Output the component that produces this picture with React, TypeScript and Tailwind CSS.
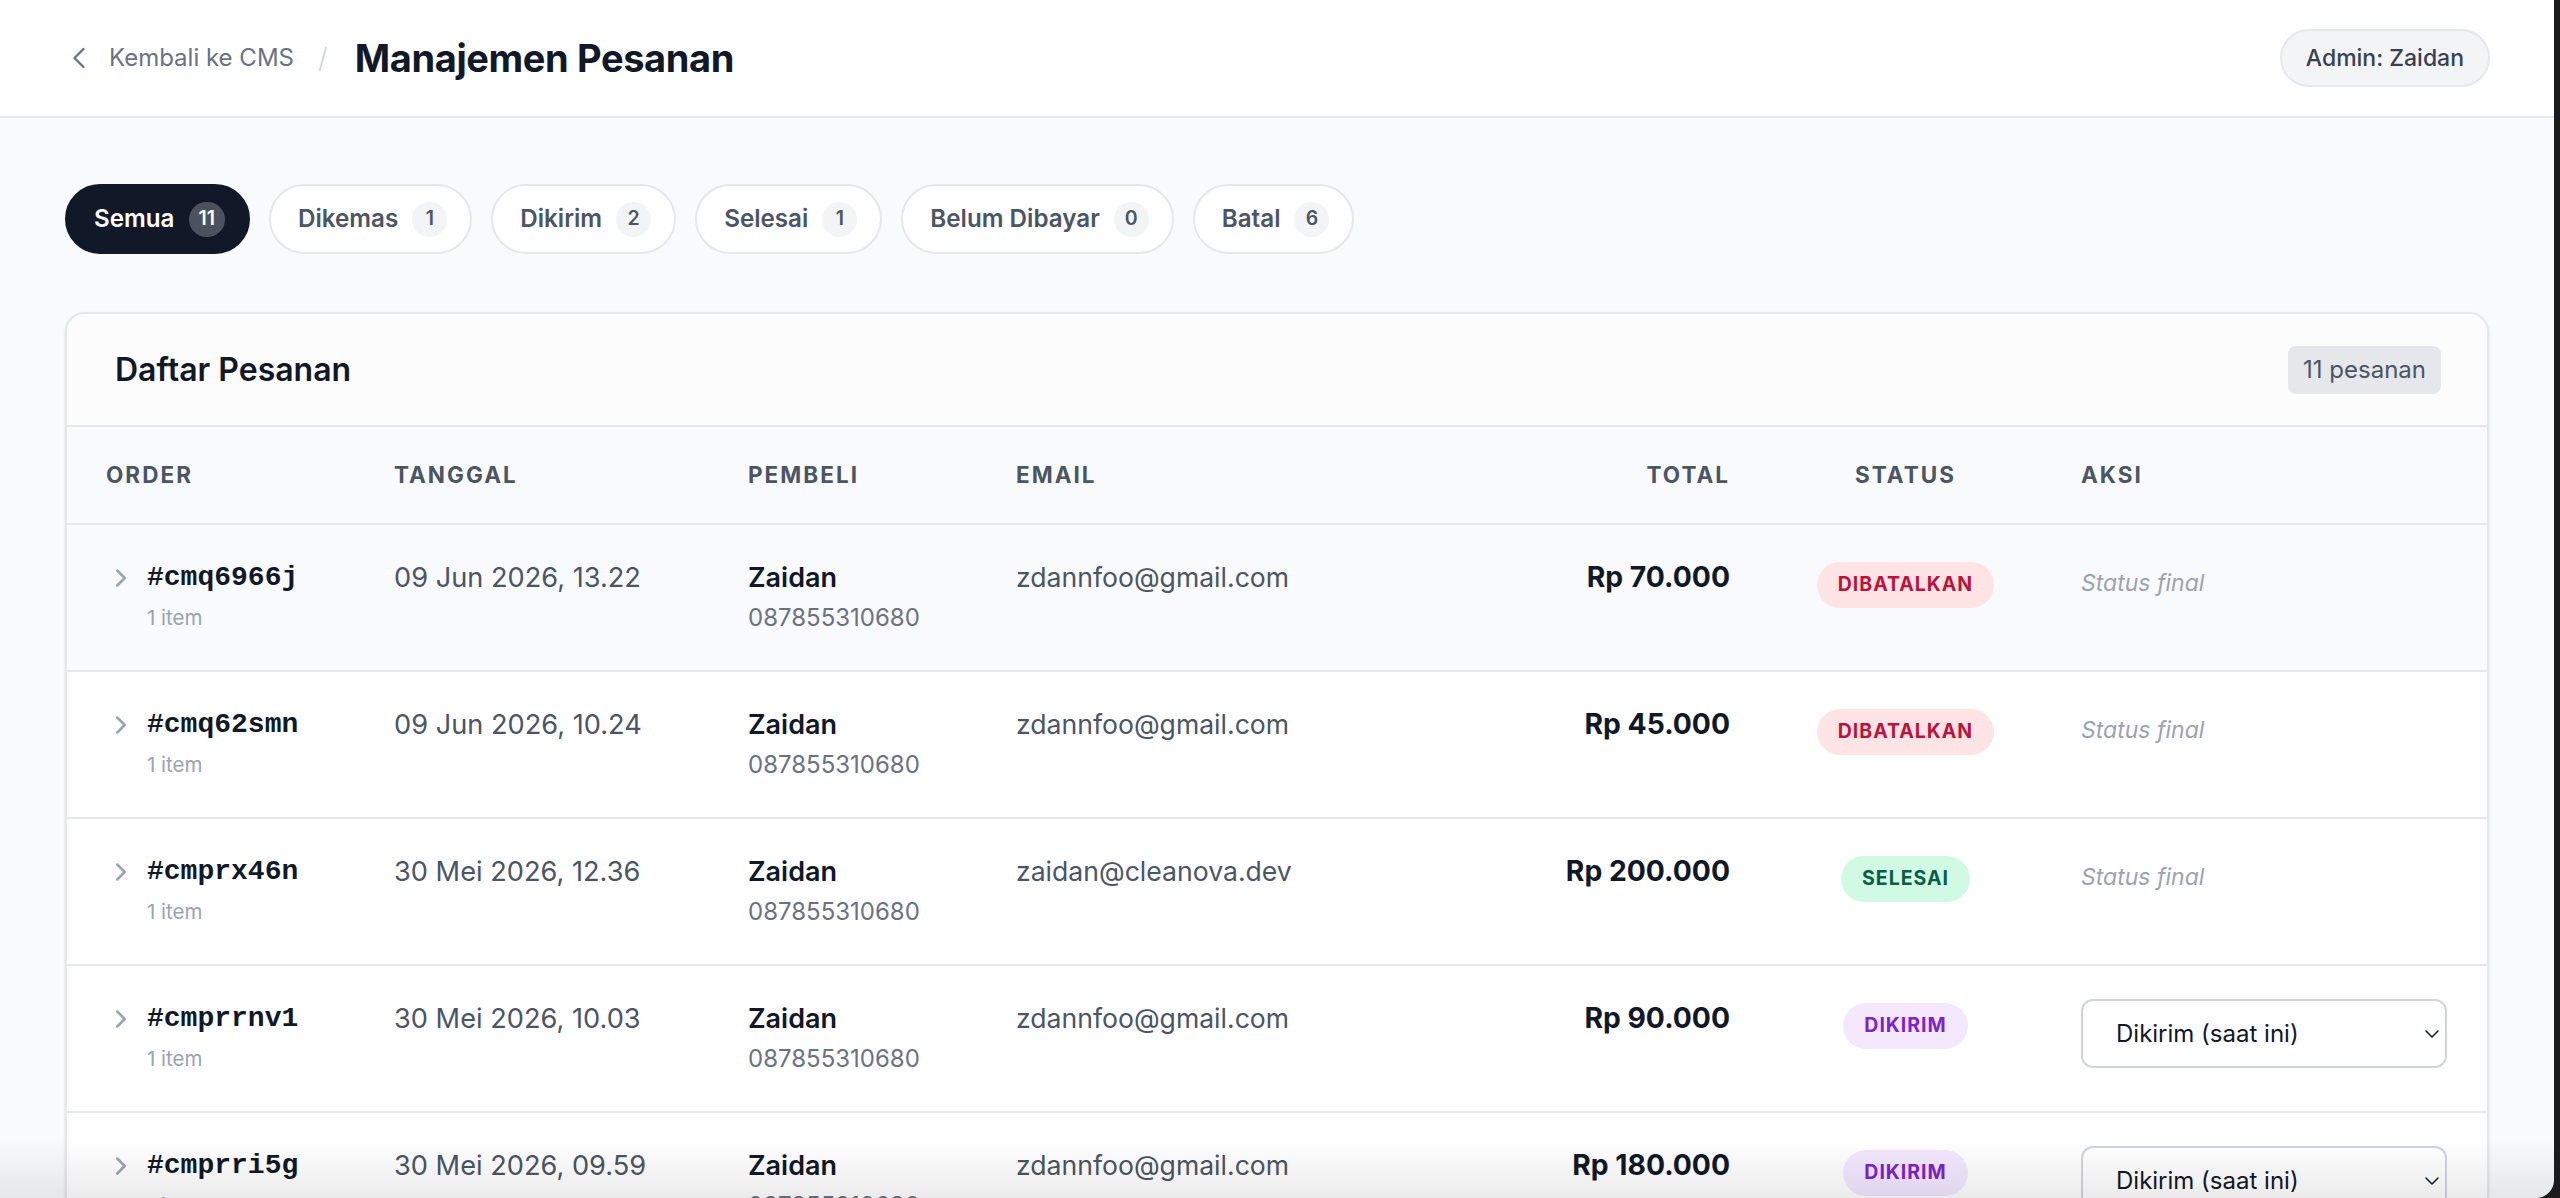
import { ChevronLeft, ChevronRight, ChevronDown } from "lucide-react";

type Status = "DIBATALKAN" | "SELESAI" | "DIKIRIM" | "DIKEMAS" | "DIBAYAR";

type Order = {
  id: string;
  date: string;
  name: string;
  phone: string;
  email: string;
  total: string;
  items: number;
  status: Status;
};

const orders: Order[] = [
  { id: "cmq6966j", date: "09 Jun 2026, 13.22", name: "Zaidan", phone: "087855310680", email: "zdannfoo@gmail.com", total: "Rp 70.000", items: 1, status: "DIBATALKAN" },
  { id: "cmq62smn", date: "09 Jun 2026, 10.24", name: "Zaidan", phone: "087855310680", email: "zdannfoo@gmail.com", total: "Rp 45.000", items: 1, status: "DIBATALKAN" },
  { id: "cmprx46n", date: "30 Mei 2026, 12.36", name: "Zaidan", phone: "087855310680", email: "zaidan@cleanova.dev", total: "Rp 200.000", items: 1, status: "SELESAI" },
  { id: "cmprrnv1", date: "30 Mei 2026, 10.03", name: "Zaidan", phone: "087855310680", email: "zdannfoo@gmail.com", total: "Rp 90.000", items: 1, status: "DIKIRIM" },
  { id: "cmprri5g", date: "30 Mei 2026, 09.59", name: "Zaidan", phone: "087855310680", email: "zdannfoo@gmail.com", total: "Rp 180.000", items: 1, status: "DIKIRIM" },
  { id: "cmpr8k2x", date: "29 Mei 2026, 21.14", name: "Zaidan", phone: "087855310680", email: "zdannfoo@gmail.com", total: "Rp 65.000", items: 1, status: "DIKEMAS" },
  { id: "cmpq1a7d", date: "28 Mei 2026, 16.40", name: "Zaidan", phone: "087855310680", email: "zdannfoo@gmail.com", total: "Rp 120.000", items: 2, status: "DIBATALKAN" },
  { id: "cmpp93fe", date: "27 Mei 2026, 08.12", name: "Zaidan", phone: "087855310680", email: "zdannfoo@gmail.com", total: "Rp 45.000", items: 1, status: "DIBATALKAN" },
  { id: "cmpo4w0c", date: "26 Mei 2026, 19.05", name: "Zaidan", phone: "087855310680", email: "zdannfoo@gmail.com", total: "Rp 70.000", items: 1, status: "DIBATALKAN" },
  { id: "cmpn7t2b", date: "25 Mei 2026, 11.31", name: "Zaidan", phone: "087855310680", email: "zdannfoo@gmail.com", total: "Rp 90.000", items: 1, status: "DIBATALKAN" },
  { id: "cmpm2h9q", date: "24 Mei 2026, 14.47", name: "Zaidan", phone: "087855310680", email: "zdannfoo@gmail.com", total: "Rp 150.000", items: 2, status: "DIBAYAR" },
];

const tabs = [
  { label: "Semua", count: 11 },
  { label: "Dikemas", count: 1 },
  { label: "Dikirim", count: 2 },
  { label: "Selesai", count: 1 },
  { label: "Belum Dibayar", count: 0 },
  { label: "Batal", count: 6 },
];

const badgeStyle: Record<Status, string> = {
  DIBATALKAN: "bg-[#ffe4e6] text-[#be123c]",
  SELESAI: "bg-[#d1fae5] text-[#065f46]",
  DIKIRIM: "bg-[#f3e8ff] text-[#7e22ce]",
  DIKEMAS: "bg-[#fef3c7] text-[#b45309]",
  DIBAYAR: "bg-[#dbeafe] text-[#1d4ed8]",
};

const selectLabel: Partial<Record<Status, string>> = {
  DIKIRIM: "Dikirim (saat ini)",
  DIKEMAS: "Dikemas (saat ini)",
  DIBAYAR: "Dibayar (saat ini)",
};

const cols = "grid grid-cols-[287px_354px_268px_1fr_269px_271px_446px]";

function StatusBadge({ status }: { status: Status }) {
  return (
    <span
      className={`inline-flex h-[46px] items-center rounded-full px-[21px] text-[19.5px] font-bold tracking-[0.05em] ${badgeStyle[status]}`}
    >
      {status}
    </span>
  );
}

function OrderRow({ order, highlighted }: { order: Order; highlighted: boolean }) {
  const final = order.status === "DIBATALKAN" || order.status === "SELESAI";
  return (
    <div
      className={`${cols} h-[147px] shrink-0 border-b-2 border-[#e5e7eb] ${
        highlighted ? "bg-[#f9fafb]" : "bg-white"
      }`}
    >
      <div className="pl-[39px] pt-[33px]">
        <div className="flex h-[39px] items-center">
          <ChevronRight size={30} strokeWidth={2} className="text-[#9ca3af]" />
          <span className="ml-[11px] font-['Liberation_Mono',monospace] text-[28px] font-bold text-[#111827]">
            #{order.id}
          </span>
        </div>
        <div className="mt-[8px] pl-[41px] text-[20.5px] leading-[26px] text-[#9ca3af]">
          {order.items} item
        </div>
      </div>
      <div className="px-[40px] pt-[33px]">
        <div className="text-[27.2px] leading-[39px] text-[#4b5563]">{order.date}</div>
      </div>
      <div className="px-[40px] pt-[33px]">
        <div className="text-[27px] font-semibold leading-[39px] text-[#111827]">{order.name}</div>
        <div className="mt-[4px] text-[24px] leading-[33px] text-[#6b7280]">{order.phone}</div>
      </div>
      <div className="px-[40px] pt-[33px]">
        <div className="text-[26.6px] leading-[39px] text-[#4b5563]">{order.email}</div>
      </div>
      <div className="px-[40px] pt-[33px] text-right">
        <div className="text-[28.3px] font-bold leading-[39px] text-[#111827]">{order.total}</div>
      </div>
      <div className="flex justify-center pt-[37px]">
        <div>
          <StatusBadge status={order.status} />
        </div>
      </div>
      <div className="px-[40px] pt-[33px]">
        {final ? (
          <div className="pt-[9px] text-[23px] italic leading-[33px] text-[#9ca3af]">Status final</div>
        ) : (
          <div className="relative">
            <select
              defaultValue="current"
              className="h-[69px] w-full appearance-none rounded-[12px] border-2 border-[#d1d5db] bg-white pl-[33px] pr-[50px] text-[24px] text-[#111827] outline-none"
            >
              <option value="current">{selectLabel[order.status]}</option>
              <option value="selesai">Selesai</option>
              <option value="batal">Batal</option>
            </select>
            <ChevronDown
              size={24}
              strokeWidth={1.5}
              className="pointer-events-none absolute right-[3px] top-1/2 -translate-y-1/2 text-[#111827]"
            />
          </div>
        )}
      </div>
    </div>
  );
}

export default function App() {
  return (
    <div className="flex h-[1198px] w-full overflow-hidden bg-[#1b1b1b] font-['Inter',sans-serif]">
      <div className="relative flex min-w-0 flex-1 flex-col overflow-hidden rounded-br-[18px] bg-[#f9fafb]">
        <header className="flex h-[118px] shrink-0 items-center justify-between border-b-2 border-[#e5e7eb] bg-white pl-[61px] pr-[64px]">
          <div className="flex items-center">
            <a className="flex items-center gap-[12px] text-[24px] text-[#6b7280]">
              <ChevronLeft size={36} strokeWidth={1.6} />
              <span>Kembali ke CMS</span>
            </a>
            <span className="ml-[24px] text-[28px] font-light text-[#d1d5db]">/</span>
            <h1 className="ml-[27px] text-[38px] font-bold tracking-[-0.01em] text-[#111827]">
              Manajemen Pesanan
            </h1>
          </div>
          <div className="flex h-[58px] items-center rounded-full border-2 border-[#e5e7eb] bg-[#f3f4f6] px-[24px] text-[23px] font-medium text-[#374151]">
            Admin: Zaidan
          </div>
        </header>

        <main className="px-[65px] pt-[66px]">
          <div className="flex gap-[19px]">
            {tabs.map((t, i) => {
              const active = i === 0;
              return (
                <button
                  key={t.label}
                  className={`flex h-[70px] items-center gap-[14px] rounded-full border-2 pl-[27px] pr-[23px] text-[24.2px] font-semibold ${
                    active
                      ? "border-[#111827] bg-[#111827] text-white"
                      : "border-[#e5e7eb] bg-white text-[#4b5563]"
                  }`}
                >
                  <span>{t.label}</span>
                  <span
                    className={`flex h-[35px] min-w-[35px] items-center justify-center rounded-full px-[10px] text-[19.5px] font-semibold ${
                      active ? "bg-white/25 text-white" : "bg-[#f3f4f6] text-[#4b5563]"
                    }`}
                  >
                    {t.count}
                  </span>
                </button>
              );
            })}
          </div>

          <section className="mt-[58px] overflow-hidden rounded-[20px] border-2 border-[#e5e7eb] bg-white shadow-sm">
            <div className="flex h-[113px] items-center justify-between border-b-2 border-[#e5e7eb] bg-[#fcfcfd] pl-[48px] pr-[46px]">
              <h2 className="text-[32px] font-semibold text-[#111827]">Daftar Pesanan</h2>
              <span className="flex h-[48px] items-center rounded-[8px] bg-[#e5e7eb] px-[15px] text-[24px] text-[#4b5563]">
                11 pesanan
              </span>
            </div>

            <div className={`${cols} h-[98px] border-b-2 border-[#e5e7eb] bg-[#f9fafb] text-[22.5px] font-bold tracking-[0.09em] text-[#4b5563]`}>
              <div className="flex items-center pl-[39px]">ORDER</div>
              <div className="flex items-center px-[40px]">TANGGAL</div>
              <div className="flex items-center px-[40px]">PEMBELI</div>
              <div className="flex items-center px-[40px]">EMAIL</div>
              <div className="flex items-center justify-end px-[40px]">TOTAL</div>
              <div className="flex items-center justify-center">STATUS</div>
              <div className="flex items-center px-[40px]">AKSI</div>
            </div>

            {orders.map((o, i) => (
              <OrderRow key={o.id} order={o} highlighted={i === 0} />
            ))}
          </section>
        </main>

        <div className="pointer-events-none absolute inset-x-0 bottom-0 h-[60px] bg-linear-to-b from-transparent to-black/[0.08]" />
      </div>
      <div className="w-[6px] shrink-0" />
    </div>
  );
}
